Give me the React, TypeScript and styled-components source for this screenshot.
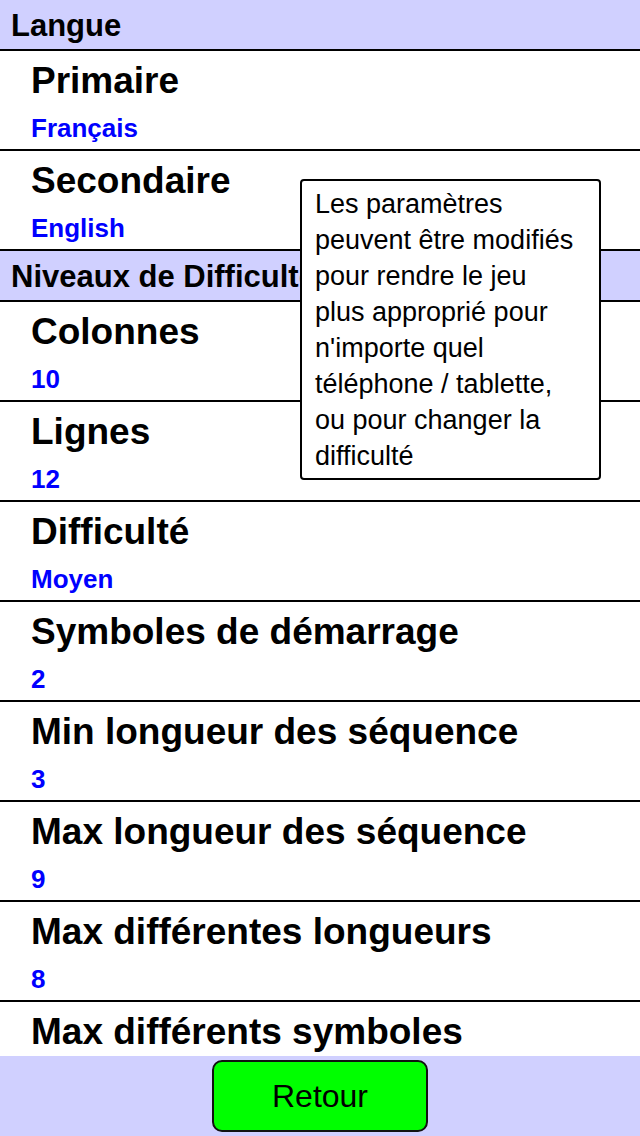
import React from "react";
import styled, { createGlobalStyle } from "styled-components";

const Global = createGlobalStyle`
  html, body { margin: 0; padding: 0; background: #ffffff; }
  body { font-family: "Liberation Sans", Arial, sans-serif; }
  * { box-sizing: border-box; }
`;

const Screen = styled.div`
  position: relative;
  width: 640px;
  height: 1136px;
  display: flex;
  flex-direction: column;
  overflow: hidden;
  background: #ffffff;
  color: #000000;
`;

const ScrollArea = styled.div`
  flex: 1;
  overflow: hidden;
  display: flex;
  flex-direction: column;
`;

const SectionHeader = styled.div`
  flex: none;
  height: 51px;
  padding-left: 11px;
  background: #d0d0ff;
  border-bottom: 2px solid #000000;
  font-size: 31px;
  font-weight: bold;
  line-height: 51px;
  white-space: nowrap;
  overflow: hidden;
`;

const Row = styled.div`
  flex: none;
  height: 100px;
  padding: 8px 0 0 31px;
  border-bottom: 2px solid #000000;
  display: flex;
  flex-direction: column;
`;

const RowTitle = styled.div`
  font-size: 37px;
  font-weight: bold;
  line-height: 44px;
  white-space: nowrap;
`;

const RowValue = styled.div`
  margin-top: 10px;
  font-size: 26px;
  font-weight: bold;
  line-height: 30px;
  color: #0000ff;
`;

const Footer = styled.div`
  flex: none;
  height: 80px;
  background: #d0d0ff;
  display: flex;
  align-items: center;
  justify-content: center;
`;

const BackButton = styled.button`
  width: 216px;
  height: 72px;
  background: #00ff00;
  border: 2px solid #111111;
  border-radius: 10px;
  font-family: "Liberation Sans", Arial, sans-serif;
  font-size: 32px;
  color: #000000;
  padding: 0;
  cursor: pointer;
`;

const Tooltip = styled.div`
  position: absolute;
  left: 300px;
  top: 179px;
  width: 301px;
  height: 301px;
  padding: 5px 17px 0 13px;
  background: #ffffff;
  border: 2px solid #000000;
  border-radius: 4px;
  font-size: 27px;
  line-height: 36px;
`;

type Setting = { title: string; value: string };

const langue: Setting[] = [
  { title: "Primaire", value: "Français" },
  { title: "Secondaire", value: "English" },
];

const niveaux: Setting[] = [
  { title: "Colonnes", value: "10" },
  { title: "Lignes", value: "12" },
  { title: "Difficulté", value: "Moyen" },
  { title: "Symboles de démarrage", value: "2" },
  { title: "Min longueur des séquence", value: "3" },
  { title: "Max longueur des séquence", value: "9" },
  { title: "Max différentes longueurs", value: "8" },
  { title: "Max différents symboles", value: "6" },
];

const SettingRow = ({ title, value }: Setting) => (
  <Row>
    <RowTitle>{title}</RowTitle>
    <RowValue>{value}</RowValue>
  </Row>
);

export default function App() {
  return (
    <Screen>
      <Global />
      <ScrollArea>
        <SectionHeader>Langue</SectionHeader>
        {langue.map((s) => (
          <SettingRow key={s.title} {...s} />
        ))}
        <SectionHeader>Niveaux de Difficulté</SectionHeader>
        {niveaux.map((s) => (
          <SettingRow key={s.title} {...s} />
        ))}
      </ScrollArea>
      <Footer>
        <BackButton>Retour</BackButton>
      </Footer>
      <Tooltip>
        Les paramètres peuvent être modifiés pour rendre le jeu plus approprié
        pour n'importe quel téléphone / tablette, ou pour changer la difficulté
      </Tooltip>
    </Screen>
  );
}
